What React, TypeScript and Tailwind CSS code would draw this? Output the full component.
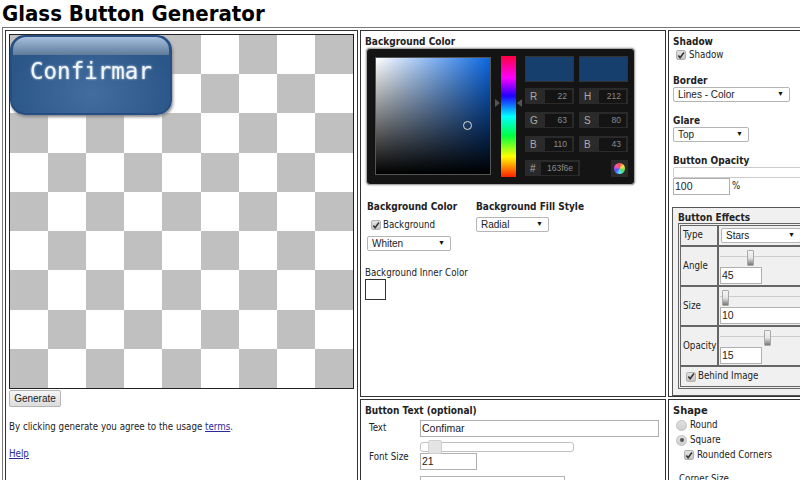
import React from "react";

const sans = "font-['DejaVu_Sans_Condensed','DejaVu_Sans',sans-serif]";
const arial = "font-['Liberation_Sans',sans-serif]";

function Check({ checked = true }: { checked?: boolean }) {
  return (
    <span className="w-[10px] h-[10px] shrink-0 rounded-[2px] border border-[#b0b0b0] bg-gradient-to-b from-[#e4e4e4] to-[#c4c4c4] flex items-center justify-center">
      {checked && (
        <svg width="9" height="9" viewBox="0 0 9 9">
          <path d="M1.5 4.5 L3.5 7 L7.8 1.2" fill="none" stroke="#333" strokeWidth="1.7" />
        </svg>
      )}
    </span>
  );
}

function Radio({ on = false }: { on?: boolean }) {
  return (
    <span className="w-[11px] h-[11px] shrink-0 rounded-full border border-[#c0c0c0] bg-gradient-to-b from-[#e0e0e0] to-[#cfcfcf] flex items-center justify-center">
      {on && <span className="w-[4px] h-[4px] rounded-full bg-[#555]" />}
    </span>
  );
}

function Select({ value, className }: { value: string; className: string }) {
  return (
    <div className={`h-[15px] flex items-center justify-between pl-[4px] pr-[5px] bg-white border border-[#b5b5b5] rounded-[2px] text-[10px] text-[#222] ${arial} ${className}`}>
      <span>{value}</span>
      <span className="text-[7px] text-[#111]">▼</span>
    </div>
  );
}

function TextBox({ value, className }: { value: string; className: string }) {
  return (
    <div className={`h-[17px] flex items-center pl-[1px] bg-white border border-[#b0b0b0] text-[10.5px] text-[#222] ${arial} ${className}`}>
      {value}
    </div>
  );
}

function Thumb({ className }: { className: string }) {
  return (
    <span className={`absolute w-[7px] h-[16px] border border-[#aaa] bg-gradient-to-b from-[#f4f4f4] via-[#e4e4e4] to-[#777] rounded-[1px] ${className}`} />
  );
}

function Field({ l, v, vw = "w-[27px]" }: { l: string; v: string; vw?: string }) {
  return (
    <div className={`h-[16px] bg-[#2a2a2a] flex items-center justify-between pl-[5px] pr-[2px] ${arial}`}>
      <span className="text-[10px] text-[#aaa]">{l}</span>
      <span className={`h-[13px] ${vw} bg-[#141414] text-[8.5px] leading-[13px] text-[#8a8a8a] text-right pr-[5px]`}>{v}</span>
    </div>
  );
}

function Picker() {
  return (
    <div className="ml-[1px] w-[269px] h-[137px] bg-[#141414] rounded-[4px] border border-[#aaa] shadow-[0_0_2px_#888] pl-[8px] pt-[7px] flex text-[10px]">
      <div className="relative w-[116px] h-[118px] mt-[1px] border border-[#555] bg-[#0a66e0]">
        <div className="absolute inset-0 bg-gradient-to-r from-white to-transparent" />
        <div className="absolute inset-0 bg-gradient-to-b from-transparent to-black" />
        <span className="absolute left-[87px] top-[63px] w-[9px] h-[9px] rounded-full border border-[#ddd]" />
      </div>
      <div className="relative ml-[10px] w-[15px] h-[121px] bg-[linear-gradient(to_bottom,#ff0040,#ff00ff_18%,#2000ff_33%,#00ffff_50%,#00ff40_66%,#ffff00_83%,#ff2000)]">
        <span className="absolute left-[-6px] top-[43px] w-0 h-0 border-y-[4px] border-y-transparent border-l-[5px] border-l-[#555]" />
        <span className="absolute right-[-6px] top-[43px] w-0 h-0 border-y-[4px] border-y-transparent border-r-[5px] border-r-[#555]" />
      </div>
      <div className="ml-[9px] w-[103px] grid grid-cols-[49px_49px] gap-x-[5px] content-start">
        <div className="h-[26px] bg-[#163f6e] border border-[#333] mb-[6px]" />
        <div className="h-[26px] bg-[#163f6e] border border-[#333] mb-[6px]" />
        <div className="mb-[8px]"><Field l="R" v="22" /></div>
        <div className="mb-[8px]"><Field l="H" v="212" /></div>
        <div className="mb-[8px]"><Field l="G" v="63" /></div>
        <div className="mb-[8px]"><Field l="S" v="80" /></div>
        <div className="mb-[8px]"><Field l="B" v="110" /></div>
        <div className="mb-[8px]"><Field l="B" v="43" /></div>
        <div className="w-[55px]"><Field l="#" v="163f6e" vw="w-[37px]" /></div>
        <div className="flex justify-end">
          <div className="h-[17px] w-[17px] bg-[#2a2a2a] flex items-center justify-center">
            <span className="w-[11px] h-[11px] rounded-full bg-[conic-gradient(#ff5050,#ffe050,#50e050,#50e0ff,#5050ff,#ff50c0,#ff5050)]" />
          </div>
        </div>
      </div>
    </div>
  );
}

function Board() {
  const cells = [];
  for (let r = 0; r < 9; r++) {
    for (let c = 0; c < 9; c++) {
      cells.push(<div key={`${r}-${c}`} className={(r + c) % 2 === 0 ? "bg-[#c0c0c0]" : "bg-white"} />);
    }
  }
  return (
    <div className="relative w-[345px] h-[355px] border border-[#222] grid grid-cols-9 grid-rows-9">
      {cells}
      <div className="absolute left-0 top-0 w-[162px] h-[80px] rounded-[15px] border-2 border-[#264e82] overflow-hidden bg-[radial-gradient(ellipse_at_50%_75%,#426d9e,#2b5688_75%)] shadow-[1px_2px_3px_#888] flex items-center justify-center pb-[6px]">
        <div className="absolute left-[1px] right-[1px] top-0 h-[18px] rounded-t-[13px] bg-gradient-to-b from-[#a7c0de] to-[#607a9a]" />
        <span className="relative text-[22.5px] text-[#f2f6fa] font-['DejaVu_Sans_Mono',monospace] drop-shadow-[0_0_1px_#cde]">Confirmar</span>
      </div>
    </div>
  );
}

function EffectRow({ label, h, children }: { label: string; h: string; children: React.ReactNode }) {
  return (
    <div className={`flex ${h}`}>
      <div className="w-[38px] shrink-0 border border-[#666] flex items-center pl-[2px]">{label}</div>
      <div className="flex-1 border border-[#666] relative pl-[1px]">{children}</div>
    </div>
  );
}

export default function App() {
  return (
    <div className={`w-[800px] h-[480px] overflow-hidden bg-white text-[#222] text-[9.7px] ${sans}`}>
      <h1 className="h-[27px] pl-[2px] text-[22px] leading-[27px] font-bold text-black">Glass Button Generator</h1>
      <div className="ml-[2px] w-[900px] border border-[#777] p-[2px] pr-0">
        <div className="grid grid-cols-[353px_306px_300px] grid-rows-[367px_200px] gap-x-[2px] gap-y-[2px]">
          <div className="row-span-2 border border-[#333] px-[3px] pt-[3px]">
            <Board />
            <button className={`mt-[1px] w-[52px] h-[17px] bg-gradient-to-b from-[#f6f6f6] to-[#dcdcdc] border border-[#b5b5b5] rounded-[2px] text-[10px] ${arial} text-[#222]`}>Generate</button>
            <p className="mt-[14px] leading-[12px]">By clicking generate you agree to the usage <a className="text-[#2a2a9e] underline">terms</a>.</p>
            <p className="mt-[15px] leading-[12px]"><a className="text-[#2a2a9e] underline">Help</a></p>
          </div>

          <div className="border border-[#333] pl-[4px] pt-[5px]">
            <div className="font-bold text-[10px] leading-[12px]">Background Color</div>
            <Picker />
            <div className="flex mt-[16px] ml-[2px]">
              <div className="w-[109px]">
                <div className="font-bold text-[10px] leading-[12px]">Background Color</div>
                <div className="flex items-center gap-[2px] pl-[4px] mt-[5px] h-[14px]"><Check /><span>Background</span></div>
                <Select value="Whiten" className="w-[84px] mt-[4px]" />
              </div>
              <div>
                <div className="font-bold text-[10px] leading-[12px]">Background Fill Style</div>
                <Select value="Radial" className="w-[73px] mt-[4px]" />
              </div>
            </div>
            <div className="mt-[16px] leading-[12px]">Background Inner Color</div>
            <div className="w-[21px] h-[21px] border border-[#333]" />
          </div>

          <div className="border border-[#333] pl-[4px] pt-[5px] overflow-hidden">
            <div className="font-bold text-[10px] leading-[12px]">Shadow</div>
            <div className="flex items-center gap-[3px] pl-[3px] h-[14px]"><Check /><span>Shadow</span></div>
            <div className="font-bold text-[10px] leading-[12px] mt-[13px]">Border</div>
            <Select value="Lines - Color" className="w-[117px]" />
            <div className="font-bold text-[10px] leading-[12px] mt-[13px]">Glare</div>
            <Select value="Top" className="w-[76px]" />
            <div className="font-bold text-[10px] leading-[12px] mt-[13px]">Button Opacity</div>
            <div className="h-[11px] w-[140px] border border-[#ccc] rounded-[2px]" />
            <div className="flex items-center gap-[2px]">
              <TextBox value="100" className="w-[57px]" /><span>%</span>
            </div>
            <div className="mt-[12px] -ml-[1px] w-[140px] h-[189px] border border-[#555] bg-[#f0f0f0] pl-[5px] pt-[5px]">
              <div className="font-bold text-[10px] leading-[10px]">Button Effects</div>
              <div className="border border-[#666] p-[1px] flex flex-col h-[166px] w-[130px]">
                <EffectRow label="Type" h="h-[21px]">
                  <Select value="Stars" className="w-[80px] mt-[2px] ml-[1px]" />
                </EffectRow>
                <EffectRow label="Angle" h="h-[40px]">
                  <div className="h-[1px] bg-[#ccc] mt-[9px]" />
                  <Thumb className="left-[28px] top-[3px]" />
                  <TextBox value="45" className="w-[42px] absolute left-[1px] top-[20px]" />
                </EffectRow>
                <EffectRow label="Size" h="h-[40px]">
                  <div className="h-[1px] bg-[#ccc] mt-[9px]" />
                  <Thumb className="left-[3px] top-[3px]" />
                  <TextBox value="10" className="w-[90px] absolute left-[1px] top-[20px]" />
                </EffectRow>
                <EffectRow label="Opacity" h="h-[40px]">
                  <div className="h-[1px] bg-[#ccc] mt-[9px]" />
                  <Thumb className="left-[45px] top-[3px]" />
                  <TextBox value="15" className="w-[42px] absolute left-[1px] top-[20px]" />
                </EffectRow>
                <div className="flex-1 border border-[#666] flex items-center gap-[2px] pl-[5px]"><Check /><span>Behind Image</span></div>
              </div>
            </div>
          </div>

          <div className="border border-[#333] pl-[4px] pt-[5px]">
            <div className="font-bold text-[10px] leading-[12px]">Button Text (optional)</div>
            <div className="flex items-center mt-[3px] h-[17px]">
              <span className="w-[55px] pl-[4px]">Text</span>
              <TextBox value="Confimar" className="w-[239px]" />
            </div>
            <div className="flex mt-[5px] h-[29px]">
              <span className="w-[55px] pl-[4px] pt-[8px]">Font Size</span>
              <div className="relative">
                <div className="h-[10px] w-[154px] border border-[#c0c0c0] rounded-[3px]" />
                <span className="absolute left-[8px] top-[-2px] w-[14px] h-[14px] bg-[#e4e4e4] border border-[#d0d0d0] rounded-[2px]" />
                <TextBox value="21" className="w-[57px] mt-[1px]" />
              </div>
            </div>
            <div className="flex mt-[5px]">
              <span className="w-[55px]" />
              <div className="h-[15px] w-[145px] border border-[#b5b5b5]" />
            </div>
          </div>

          <div className="border border-[#333] pl-[4px] pt-[5px]">
            <div className="font-bold leading-[12px] text-[11px]">Shape</div>
            <div className="flex items-center gap-[3px] pl-[3px] h-[14px] mt-[1px]"><Radio /><span>Round</span></div>
            <div className="flex items-center gap-[3px] pl-[3px] h-[14px] mt-[1px]"><Radio on /><span>Square</span></div>
            <div className="flex items-center gap-[3px] pl-[11px] h-[14px] mt-[1px]"><Check /><span>Rounded Corners</span></div>
            <div className="pl-[6px] mt-[11px] leading-[12px]">Corner Size</div>
          </div>
        </div>
      </div>
    </div>
  );
}
